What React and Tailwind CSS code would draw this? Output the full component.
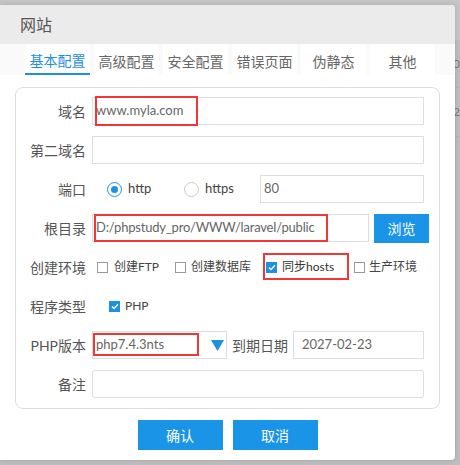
const font = { fontFamily: 'Lato, "Noto Sans CJK SC", sans-serif' };

function Box({ checked }) {
  if (checked) {
    return (
      <span className="w-[11px] h-[11px] bg-[#1e90e0] flex items-center justify-center shrink-0">
        <svg width="8" height="7" viewBox="0 0 8 7" fill="none">
          <path d="M1 3.6l2 2 4-4.4" stroke="#fff" strokeWidth="1.4" />
        </svg>
      </span>
    );
  }
  return <span className="w-[11px] h-[11px] border border-[#999] bg-white shrink-0" />;
}

function Radio({ checked }) {
  return (
    <span
      className={
        "w-[15px] h-[15px] rounded-full border flex items-center justify-center shrink-0 " +
        (checked ? "border-[#1e90e0]" : "border-[#ccc]")
      }
    >
      {checked && <span className="w-[7px] h-[7px] rounded-full bg-[#1e90e0]" />}
    </span>
  );
}

function Mark({ className }) {
  return <span className={"absolute border-2 border-[#f23535] pointer-events-none " + className} />;
}

function Row({ label, children }) {
  return (
    <div className="flex items-center h-[28px]">
      <div className="w-[70px] text-right text-[14px] text-[#555] shrink-0">{label}</div>
      <div className="ml-[6px] flex items-center h-full flex-1">{children}</div>
    </div>
  );
}

const field = "h-[28px] border border-[#ddd] bg-white flex items-center pl-[3px] text-[13px] text-[#666]";

export default function App() {
  const tabs = ["基本配置", "高级配置", "安全配置", "错误页面", "伪静态", "其他"];

  return (
    <div className="relative w-[460px] h-[465px] bg-[#bdbdbd] overflow-hidden" style={font}>
      {/* page behind the dialog */}
      <div className="h-[40px] bg-[#c5c5c5]" />
      <div className="h-[48px] border-b border-[#b2b2b2] flex items-center pl-[453px] text-[12px] text-[#777]">0</div>
      <div className="h-[49px] border-b border-[#b2b2b2] flex items-center pl-[453px] text-[12px] text-[#777]">2</div>

      {/* dialog */}
      <div className="absolute left-0 top-[5px] w-[455px] h-[455px] bg-white rounded-r-[4px] overflow-hidden shadow-[0_0_4px_rgba(0,0,0,0.15)]">
        <div className="h-[39px] bg-[#ebebeb] flex items-center pl-[20px] text-[16px] text-[#555]">网站</div>

        <div className="h-[31px] flex pl-[25px] gap-[4px] bg-[#fafafa]">
          {tabs.map((t, i) => (
            <div
              key={t}
              className={
                "w-[65px] flex items-center justify-center pt-[4px] text-[14px] bg-white " +
                (i === 0 ? "text-[#1e90e0] border-b-2 border-[#1e90e0]" : "text-[#666]")
              }
            >
              {t}
            </div>
          ))}
        </div>

        <div className="mx-[15px] mt-[12px] border border-[#ddd] rounded-[8px] pt-[9px] pb-[10px] pr-[15px] flex flex-col gap-[11px]">
          <Row label="域名">
            <div className={field + " relative w-full"}>
              www.myla.com
              <Mark className="left-[2px] top-[-2px] w-[103px] h-[30px]" />
            </div>
          </Row>

          <Row label="第二域名">
            <div className={field + " w-full"} />
          </Row>

          <Row label="端口">
            <div className="ml-[15px] w-[77px] flex items-center gap-[6px] text-[13px] text-[#444]">
              <Radio checked />
              http
            </div>
            <div className="w-[76px] flex items-center gap-[6px] text-[13px] text-[#444]">
              <Radio />
              https
            </div>
            <div className={field + " flex-1"}>80</div>
          </Row>

          <Row label="根目录">
            <div className={field + " relative w-[277px] pl-[2px] tracking-[-0.2px]"}>
              D:/phpstudy_pro/WWW/laravel/public
              <Mark className="left-[1px] top-[-1px] w-[234px] h-[28px]" />
            </div>
            <button className="ml-[5px] w-[55px] h-[29px] bg-[#1a94e6] text-white text-[14px]">浏览</button>
          </Row>

          <Row label="创建环境">
            <div className="ml-[5px] w-[78px] flex items-center gap-[6px] text-[12px] text-[#444]">
              <Box />
              创建FTP
            </div>
            <div className="w-[91px] flex items-center gap-[5px] text-[12px] text-[#444]">
              <Box />
              创建数据库
            </div>
            <div className="relative w-[88px] h-full flex items-center gap-[5px] text-[12px] text-[#333]">
              <Box checked />
              同步hosts
              <Mark className="left-[-3px] top-0 w-[86px] h-[27px]" />
            </div>
            <div className="flex items-center gap-[4px] text-[12px] text-[#444]">
              <Box />
              生产环境
            </div>
          </Row>

          <Row label="程序类型">
            <div className="ml-[17px] flex items-center gap-[5px] text-[12px] text-[#444]">
              <Box checked />
              PHP
            </div>
          </Row>

          <Row label="PHP版本">
            <div className={field + " relative w-[135px] pl-[2px] justify-between pr-[2px]"}>
              php7.4.3nts
              <svg width="13" height="11" viewBox="0 0 13 11">
                <polygon points="0,0 13,0 6.5,11" fill="#1e90e0" />
              </svg>
              <Mark className="left-0 top-[1px] w-[106px] h-[23px]" />
            </div>
            <div className="ml-[5px] w-[61px] text-[14px] text-[#555]">到期日期</div>
            <div className={field + " flex-1 pl-[8px]"}>2027-02-23</div>
          </Row>

          <Row label="备注">
            <div className={field + " w-full rounded-[3px]"} />
          </Row>
        </div>

        <div className="mx-[15px] mt-[11px] flex justify-center gap-[10px]">
          <button className="w-[85px] h-[30px] bg-[#1a94e6] text-white text-[14px]">确认</button>
          <button className="w-[85px] h-[30px] bg-[#1a94e6] text-white text-[14px]">取消</button>
        </div>
      </div>
    </div>
  );
}
